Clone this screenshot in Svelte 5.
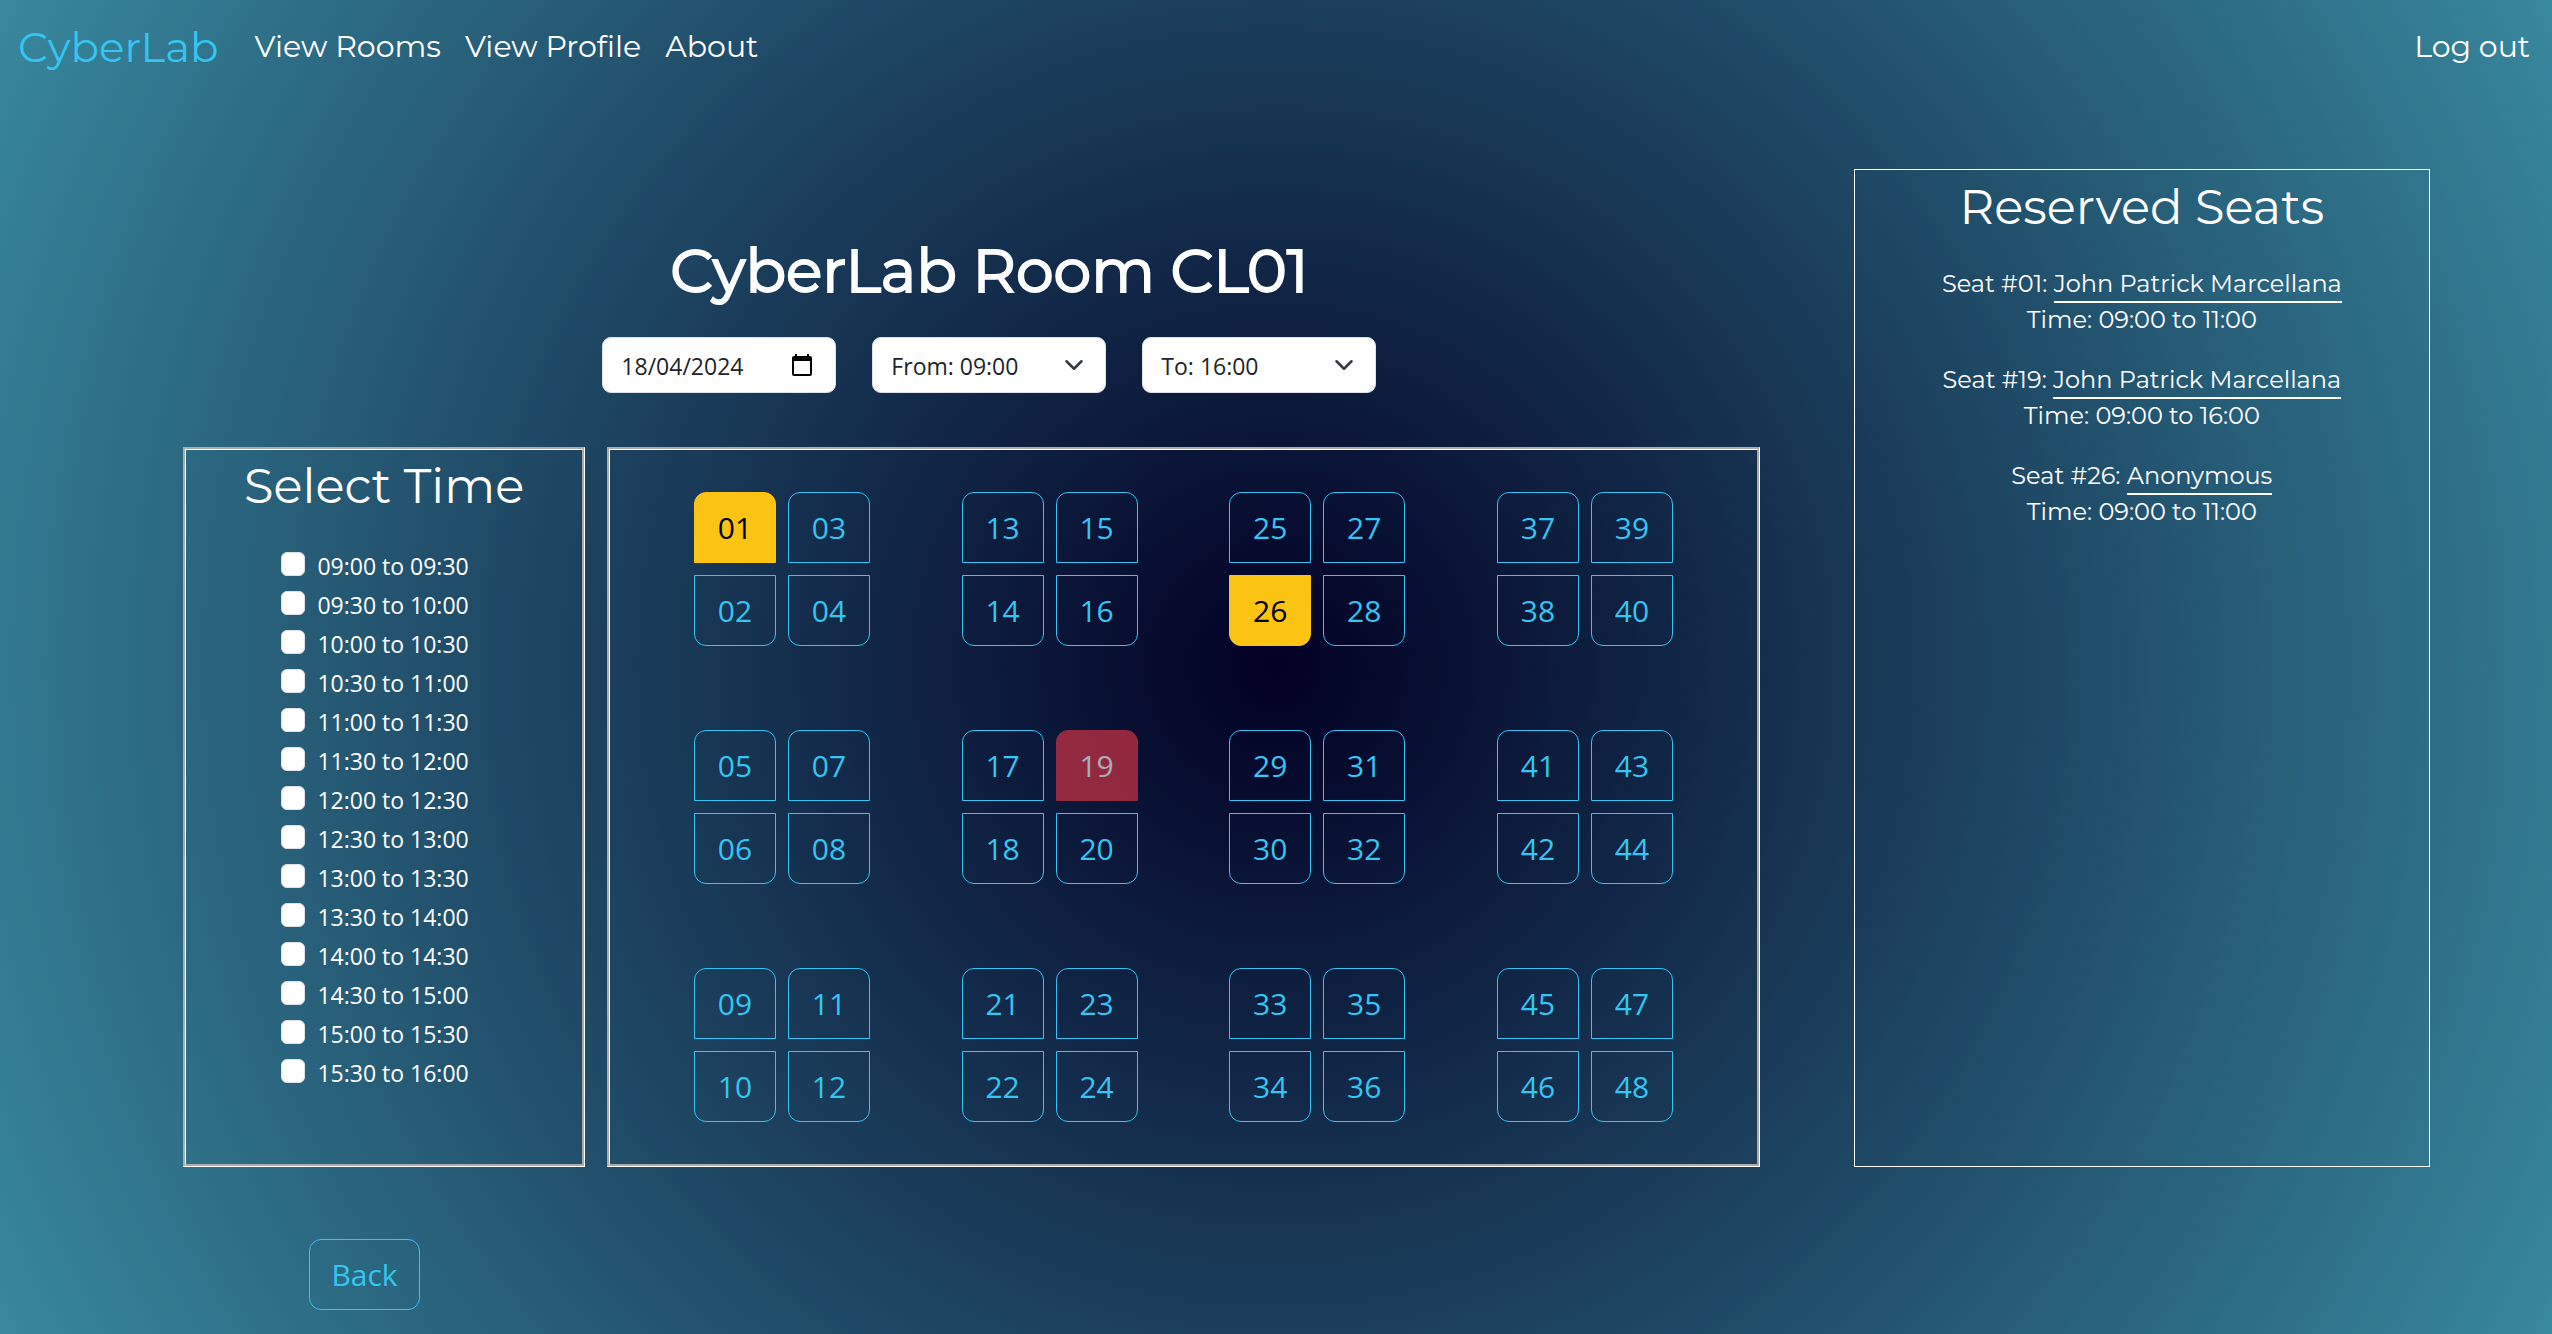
<script>
  const navLinks = ['View Rooms', 'View Profile', 'About'];
  const pad = (n) => String(n).padStart(2, '0');
  const clock = (half) => `${pad(Math.floor(half / 2))}:${half % 2 ? '30' : '00'}`;
  const slots = Array.from({ length: 14 }, (_, i) => `${clock(18 + i)} to ${clock(19 + i)}`);
  const hours = Array.from({ length: 15 }, (_, i) => clock(18 + i));

  const status = { 1: 'taken', 26: 'taken', 19: 'mine' };
  const clusters = [];
  for (let row = 0; row < 3; row++) {
    for (let col = 0; col < 4; col++) {
      const first = col * 12 + row * 4 + 1;
      clusters.push([first, first + 2, first + 1, first + 3]);
    }
  }

  const reserved = [
    { seat: '01', name: 'John Patrick Marcellana', time: '09:00 to 11:00' },
    { seat: '19', name: 'John Patrick Marcellana', time: '09:00 to 16:00' },
    { seat: '26', name: 'Anonymous', time: '09:00 to 11:00' },
  ];

  let from = $state('09:00');
  let to = $state('16:00');
</script>

<div class="page">
  <nav>
    <a class="brand" href="#home">CyberLab</a>
    {#each navLinks as link}
      <a class="link" href="#{link}">{link}</a>
    {/each}
    <a class="link logout" href="#logout">Log out</a>
  </nav>

  <main>
    <section class="room">
      <header>
        <h1>CyberLab Room CL01</h1>
        <form class="filters">
          <label class="field">
            <input type="text" value="18/04/2024" aria-label="Date" />
            <svg class="calendar" viewBox="0 0 20 22" aria-hidden="true">
              <path d="M3 0h2v2h10V0h2v2h1a2 2 0 0 1 2 2v16a2 2 0 0 1-2 2H2a2 2 0 0 1-2-2V4a2 2 0 0 1 2-2h1zM2 7v13h16V7z" fill="#000" fill-rule="evenodd" />
            </svg>
          </label>
          <label class="field">
            <select bind:value={from} aria-label="From">
              {#each hours as h}<option value={h}>From: {h}</option>{/each}
            </select>
            <svg class="chevron" viewBox="0 0 16 16" aria-hidden="true"><path d="m2 5 6 6 6-6" /></svg>
          </label>
          <label class="field">
            <select bind:value={to} aria-label="To">
              {#each hours as h}<option value={h}>To: {h}</option>{/each}
            </select>
            <svg class="chevron" viewBox="0 0 16 16" aria-hidden="true"><path d="m2 5 6 6 6-6" /></svg>
          </label>
        </form>
      </header>
      <div class="boxes">
        <section class="box times">
          <h2>Select Time</h2>
          <ul>
            {#each slots as slot}
              <li><label><input type="checkbox" />{slot}</label></li>
            {/each}
          </ul>
        </section>
        <section class="box seats">
          {#each clusters as cluster}
            <div class="cluster">
              {#each cluster as seat}
                <button class="outline seat {status[seat] ?? ''}" disabled={status[seat] === 'mine'}>{pad(seat)}</button>
              {/each}
            </div>
          {/each}
        </section>
      </div>
    </section>

    <aside>
      <h2>Reserved Seats</h2>
      {#each reserved as r}
        <p>Seat #{r.seat}: <a href="#profile">{r.name}</a><br />Time: {r.time}</p>
      {/each}
    </aside>
  </main>

  <button class="outline back">Back</button>
</div>

<style>
  :global(body) { margin: 0; }
  :global(*) { box-sizing: border-box; }

  .page {
    --ui: "Open Sans", "Noto Sans", sans-serif;
    --display: Montserrat, Inter, sans-serif;
    --cyan: #35c5f0;
    min-height: 100vh;
    background: radial-gradient(circle, #020024 0%, #38889e 100%);
    color: #fff;
    font-family: var(--display);
    font-size: 24px;
    line-height: 36px;
  }

  nav {
    display: flex;
    align-items: center;
    height: 94px;
    padding: 0 22px 0 18px;
    gap: 24px;
  }
  nav a { color: #fff; text-decoration: none; font-size: 30px; }
  nav .brand { color: var(--cyan); font-size: 42px; margin-right: 12px; }
  nav .logout { margin-left: auto; }

  main {
    display: grid;
    grid-template-columns: 1576fr 576fr;
    column-gap: 94px;
    padding: 75px 122px 0 183px;
  }
  h1, h2 { margin: 0; text-align: center; font-weight: 400; }
  h1 { font-size: 60px; line-height: 72px; -webkit-text-stroke: 2px #fff; }
  h2 { font-size: 48px; line-height: 58px; }
  .room { padding-top: 66px; }
  header { padding-left: 36px; }

  .filters {
    display: flex;
    justify-content: center;
    gap: 36px;
    margin: 30px 0 54px;
  }
  .field { display: grid; width: 234px; align-items: center; }
  .field > * { grid-area: 1 / 1; }
  .field input, .field select {
    width: 100%;
    height: 56px;
    padding: 2px 18px 0;
    border: 1px solid #dee2e6;
    border-radius: 9px;
    background: #fff;
    color: #212529;
    font: 23px var(--ui);
    appearance: none;
  }
  .calendar, .chevron { justify-self: end; pointer-events: none; }
  .calendar { width: 20px; height: 22px; margin-right: 24px; }
  .chevron {
    width: 20px;
    height: 20px;
    margin-right: 22px;
    fill: none;
    stroke: #343a40;
    stroke-width: 2;
    stroke-linecap: round;
    stroke-linejoin: round;
  }

  .boxes { display: grid; grid-template-columns: 402fr 1152fr; gap: 22px; }
  .box { min-height: 720px; border: 3px groove #fff; }
  .times { padding-top: 7px; }
  ul {
    display: grid;
    justify-content: center;
    margin: 31px 0 0;
    padding: 0 18px 0 0;
    list-style: none;
  }
  li { height: 39px; }
  li label { display: flex; gap: 12px; font: 23px/40px var(--ui); }
  li input {
    width: 24px;
    height: 24px;
    margin: 6px 0 0;
    border: 1px solid #dee2e6;
    border-radius: 6px;
    background: #fff;
    appearance: none;
  }
  li input:checked { background: var(--cyan); }

  .seats {
    display: grid;
    grid-template-columns: repeat(4, 1fr);
    grid-auto-rows: 154px;
    row-gap: 84px;
    padding: 42px 38px 0;
  }
  .cluster {
    display: grid;
    grid-template-columns: repeat(2, 82px);
    justify-content: center;
    gap: 12px;
  }
  .outline {
    border: 1px solid var(--cyan);
    border-radius: 12px;
    background: none;
    color: var(--cyan);
    font: 30px var(--ui);
    cursor: pointer;
  }
  .seat { height: 71px; padding: 0; border-radius: 12px 12px 0 0; }
  .seat:nth-child(n + 3) { border-radius: 0 0 12px 12px; }
  .taken { background: #fbc412; border-color: #fbc412; color: #000; }
  .mine { background: #dc3545; border-color: #dc3545; color: #fff; opacity: 0.65; }

  aside { border: 1px solid #fff; padding-top: 8px; text-align: center; }
  aside p { margin: 0 0 24px; }
  aside h2 { margin-bottom: 30px; }
  aside a { color: #fff; text-decoration: none; border-bottom: 2px solid #fff; padding-bottom: 3px; }

  .back { display: block; width: 111px; height: 71px; margin: 72px 0 0 309px; }
  .page { padding-bottom: 24px; }
</style>
